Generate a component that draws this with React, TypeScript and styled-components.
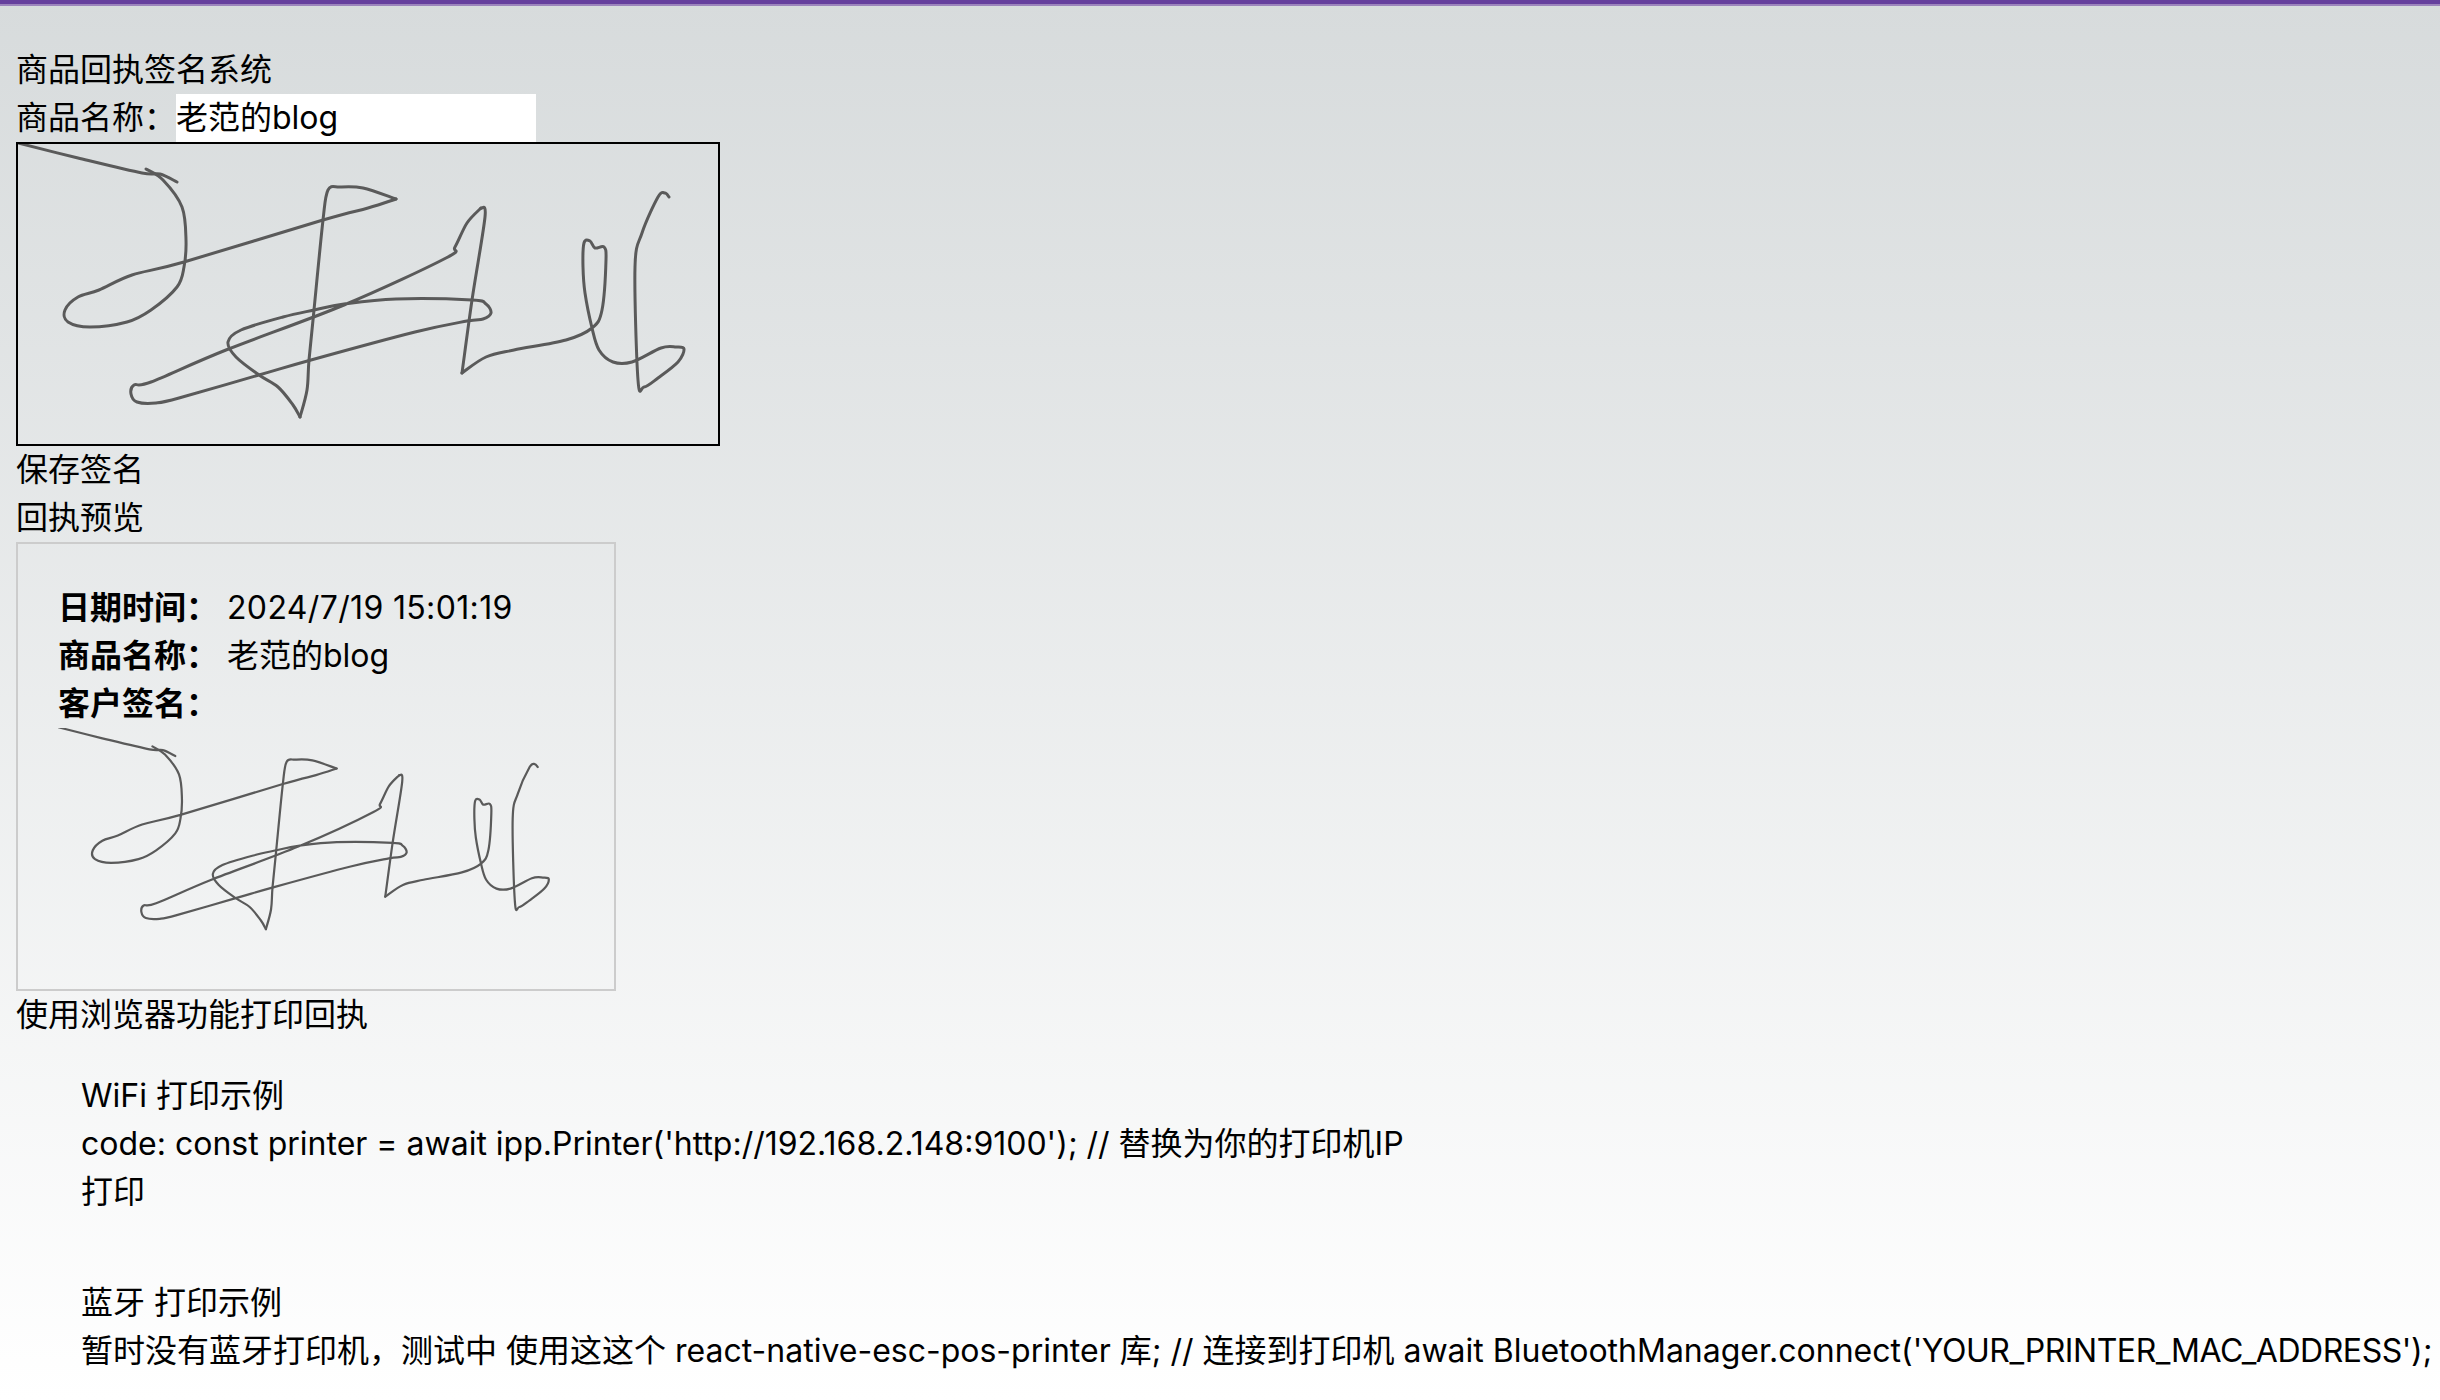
import styled, { createGlobalStyle } from "styled-components";

const GlobalStyle = createGlobalStyle`
  html, body {
    margin: 0;
    padding: 0;
  }

  body {
    min-height: 1400px;
    overflow: hidden;
    background: linear-gradient(180deg, #d7dbdc 0%, #ffffff 100%);
    color: #000;
    font-family: Inter, "Noto Sans CJK SC", sans-serif;
    font-size: 32px;
    line-height: 48px;
  }
`;

// traced off the signature, x/y in canvas pixels (700x300)
const strokes: number[][][] = [
  [[0, -1], [60, 14], [124, 29], [142, 30], [159, 38]],
  [[128, 25], [145, 36], [164, 63], [168, 96], [166, 123], [159, 143], [133, 166], [109, 178], [72, 183], [50, 178], [47, 166], [60, 153], [81, 146], [114, 131], [166, 118], [305, 76], [350, 64], [378, 55]],
  [[378, 55], [345, 44], [322, 43], [310, 46], [305, 76], [296, 166], [291, 216], [289, 246], [282, 273]],
  [[282, 273], [275, 261], [260, 243], [241, 231], [218, 213], [210, 198], [223, 186], [265, 173], [296, 166], [326, 160], [378, 155], [454, 156], [468, 160], [473, 169], [465, 175], [449, 177], [397, 188], [293, 216], [241, 231], [161, 254], [138, 259], [119, 258], [113, 250], [116, 241], [133, 238], [208, 206], [326, 161], [428, 114], [437, 103], [449, 79], [463, 64]],
  [[463, 64], [467, 73], [454, 156], [444, 229]],
  [[444, 229], [468, 213], [496, 206], [548, 196], [574, 184], [584, 166], [588, 116], [586, 103], [577, 104], [572, 97], [566, 99], [565, 123], [567, 149], [574, 184], [581, 206], [595, 218], [614, 218], [643, 204], [658, 203], [666, 205], [660, 218], [640, 234], [626, 243], [620, 236], [617, 123], [624, 89], [640, 53], [647, 49], [651, 53]],
];

// catmull-rom through the traced points, so the strokes stay round
const toPath = (points: number[][]) => {
  let d = `M${points[0][0]} ${points[0][1]}`;
  for (let i = 0; i < points.length - 1; i++) {
    const p0 = points[Math.max(i - 1, 0)];
    const p1 = points[i];
    const p2 = points[i + 1];
    const p3 = points[Math.min(i + 2, points.length - 1)];
    const c1x = p1[0] + (p2[0] - p0[0]) / 6;
    const c1y = p1[1] + (p2[1] - p0[1]) / 6;
    const c2x = p2[0] - (p3[0] - p1[0]) / 6;
    const c2y = p2[1] - (p3[1] - p1[1]) / 6;
    d += ` C${c1x.toFixed(1)} ${c1y.toFixed(1)} ${c2x.toFixed(1)} ${c2y.toFixed(1)} ${p2[0]} ${p2[1]}`;
  }
  return d;
};

const Signature = ({ className }: { className?: string }) => (
  <svg className={className} viewBox="0 0 700 300" fill="none" aria-label="signature">
    {strokes.map((points, i) => (
      <path key={i} d={toPath(points)} strokeLinecap="round" strokeLinejoin="round" />
    ))}
  </svg>
);

const App = () => {
  return (
    <>
      <GlobalStyle />
      <TopBar />
      <Page>
        <div>商品回执签名系统</div>
        <NameRow>
          <span>商品名称：</span>
          <NameInput defaultValue="老范的blog" />
        </NameRow>
        <SignatureBox>
          <CanvasSignature />
        </SignatureBox>
        <PlainButton>保存签名</PlainButton>
        <div>回执预览</div>
        <Receipt>
          <ReceiptRow>
            <strong>日期时间：</strong>
            <Tracked $spacing={0.35}>2024/7/19 15:01:19</Tracked>
          </ReceiptRow>
          <ReceiptRow>
            <strong>商品名称：</strong>
            <span>老范的blog</span>
          </ReceiptRow>
          <ReceiptRow>
            <strong>客户签名：</strong>
          </ReceiptRow>
          <ReceiptSignature />
        </Receipt>
        <PlainButton>使用浏览器功能打印回执</PlainButton>
        <Example>
          <div>WiFi 打印示例</div>
          <div>code: const printer = await ipp.Printer('http://192.168.2.148:9100'); // 替换为你的打印机IP</div>
          <PlainButton>打印</PlainButton>
        </Example>
        <Example $gap={63}>
          <div>蓝牙 打印示例</div>
          <div>
            暂时没有蓝牙打印机，测试中 使用这这个 react-native-esc-pos-printer 库; // 连接到打印机 await
            BluetoothManager.connect(<Tracked $spacing={-0.45}>'YOUR_PRINTER_MAC_ADDRESS'</Tracked>);
          </div>
        </Example>
      </Page>
    </>
  );
};

export default App;

const TopBar = styled.div`
  height: 4px;
  background: #663f9d;
  border-bottom: 2px solid #9c84bc;
`;

const Page = styled.div`
  padding: 40px 16px 0;
  white-space: nowrap;
`;

const NameRow = styled.div`
  display: flex;
  height: 48px;
`;

const NameInput = styled.input`
  width: 360px;
  height: 48px;
  padding: 0;
  border: none;
  outline: none;
  background: #fff;
  color: #000;
  font: inherit;
`;

const SignatureBox = styled.div`
  width: 700px;
  height: 300px;
  border: 2px solid #000;
`;

const CanvasSignature = styled(Signature)`
  display: block;
  width: 100%;
  height: 100%;
  filter: blur(0.6px);

  path {
    stroke: #5a5a5a;
    stroke-width: 3;
  }
`;

const PlainButton = styled.button`
  display: block;
  padding: 0;
  border: none;
  background: none;
  color: #000;
  font: inherit;
  line-height: 48px;
`;

const Receipt = styled.div`
  width: 516px;
  padding: 40px;
  border: 2px solid #ccc;
`;

const ReceiptRow = styled.div`
  display: flex;
  height: 48px;

  strong {
    width: 169px;
    font-weight: 700;
  }
`;

const ReceiptSignature = styled(Signature)`
  display: block;
  width: 516px;
  height: 221px;
  filter: blur(0.4px);

  path {
    stroke: #5a5a5a;
    stroke-width: 3;
  }
`;

const Tracked = styled.span<{ $spacing: number }>`
  letter-spacing: ${(p) => p.$spacing}px;
`;

const Example = styled.div<{ $gap?: number }>`
  margin-top: ${(p) => p.$gap ?? 33}px;
  padding-left: 65px;
`;
